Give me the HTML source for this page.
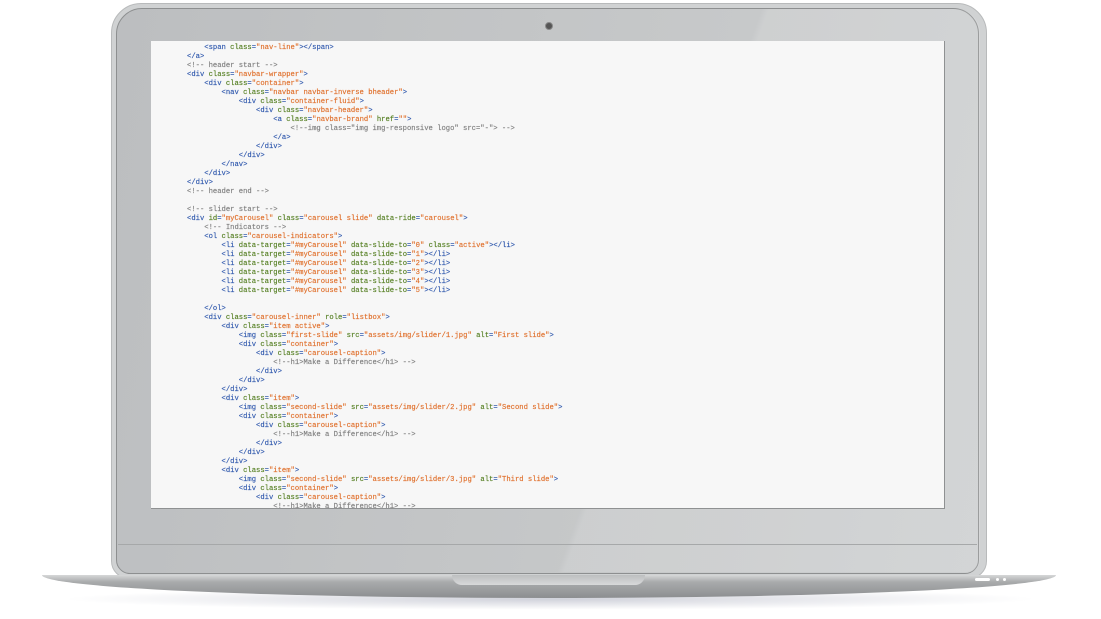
<!DOCTYPE html>
<html><head><meta charset="utf-8"><style>
html,body{margin:0;padding:0;background:#fff;width:1101px;height:619px;overflow:hidden;position:relative;font-family:"Liberation Sans",sans-serif}
.abs{position:absolute}
#shadow{left:60px;top:588px;width:980px;height:22px;border-radius:50%;background:radial-gradient(ellipse at center,rgba(120,125,150,.35),rgba(255,255,255,0) 70%)}
#lid{left:111px;top:3px;width:874px;height:574px;border-radius:30px 30px 18px 18px;background:#d0d2d3;border:1px solid #b8babb}
#lid2{left:116px;top:8px;width:863px;height:566px;border-radius:26px 26px 14px 14px;background:linear-gradient(100deg,#bcbec0 0%,#c6c8c9 60%,#cdcfd0 100%);border:1.5px solid #8d8f90;box-sizing:border-box}
#refl{left:480px;top:9px;width:500px;height:563px;background:linear-gradient(110deg,rgba(255,255,255,0) 0%,rgba(255,255,255,0) 40%,rgba(255,255,255,.12) 41%,rgba(255,255,255,.12) 100%);border-radius:0 24px 12px 0}
#hinge{left:118px;top:544px;width:859px;height:1px;background:#a6a8a9}
#cam{left:545px;top:22px;width:6px;height:6px;border-radius:50%;background:#555;border:1px solid #888}
#screen{left:151px;top:41px;width:794px;height:468px;background:#f7f7f7;border-right:1px solid #8f9192;border-bottom:1px solid #8f9192;box-sizing:border-box;overflow:hidden}
#base{left:42px;top:575px;width:1014px;height:23px;background:linear-gradient(#d6d7d8 0%,#a9abac 30%,#8c8e90 100%);border-radius:0 0 50% 50% / 0 0 100% 100%}
#notch{left:452px;top:575px;width:193px;height:10px;background:linear-gradient(#bdbfc0,#d8d9da);border-radius:0 0 12px 12px}
.led{top:578px;height:3px;background:#fff;border-radius:2px}
pre{margin:0;position:absolute;left:36px;top:3px;font-family:"Liberation Mono",monospace;font-size:7.2px;line-height:9px;color:#2f58ad;-webkit-text-stroke:0.15px}
.a{color:#557f22}.s{color:#e0702c}.c{color:#7f7f7f}
</style></head><body>
<div class="abs" id="shadow"></div>
<div class="abs" id="lid"></div>
<div class="abs" id="lid2"></div>
<div class="abs" id="refl"></div>
<div class="abs" id="hinge"></div>
<div class="abs" id="cam"></div>
<div class="abs" id="screen"><pre>    &lt;span <span class="a">class</span>=<span class="s">"nav-line"</span>&gt;&lt;/span&gt;
&lt;/a&gt;
<span class="c">&lt;!-- header start --&gt;</span>
&lt;div <span class="a">class</span>=<span class="s">"navbar-wrapper"</span>&gt;
    &lt;div <span class="a">class</span>=<span class="s">"container"</span>&gt;
        &lt;nav <span class="a">class</span>=<span class="s">"navbar navbar-inverse bheader"</span>&gt;
            &lt;div <span class="a">class</span>=<span class="s">"container-fluid"</span>&gt;
                &lt;div <span class="a">class</span>=<span class="s">"navbar-header"</span>&gt;
                    &lt;a <span class="a">class</span>=<span class="s">"navbar-brand"</span> <span class="a">href</span>=<span class="s">""</span>&gt;
                        <span class="c">&lt;!--img class="img img-responsive logo" src="-"&gt; --&gt;</span>
                    &lt;/a&gt;
                &lt;/div&gt;
            &lt;/div&gt;
        &lt;/nav&gt;
    &lt;/div&gt;
&lt;/div&gt;
<span class="c">&lt;!-- header end --&gt;</span>

<span class="c">&lt;!-- slider start --&gt;</span>
&lt;div <span class="a">id</span>=<span class="s">"myCarousel"</span> <span class="a">class</span>=<span class="s">"carousel slide"</span> <span class="a">data-ride</span>=<span class="s">"carousel"</span>&gt;
    <span class="c">&lt;!-- Indicators --&gt;</span>
    &lt;ol <span class="a">class</span>=<span class="s">"carousel-indicators"</span>&gt;
        &lt;li <span class="a">data-target</span>=<span class="s">"#myCarousel"</span> <span class="a">data-slide-to</span>=<span class="s">"0"</span> <span class="a">class</span>=<span class="s">"active"</span>&gt;&lt;/li&gt;
        &lt;li <span class="a">data-target</span>=<span class="s">"#myCarousel"</span> <span class="a">data-slide-to</span>=<span class="s">"1"</span>&gt;&lt;/li&gt;
        &lt;li <span class="a">data-target</span>=<span class="s">"#myCarousel"</span> <span class="a">data-slide-to</span>=<span class="s">"2"</span>&gt;&lt;/li&gt;
        &lt;li <span class="a">data-target</span>=<span class="s">"#myCarousel"</span> <span class="a">data-slide-to</span>=<span class="s">"3"</span>&gt;&lt;/li&gt;
        &lt;li <span class="a">data-target</span>=<span class="s">"#myCarousel"</span> <span class="a">data-slide-to</span>=<span class="s">"4"</span>&gt;&lt;/li&gt;
        &lt;li <span class="a">data-target</span>=<span class="s">"#myCarousel"</span> <span class="a">data-slide-to</span>=<span class="s">"5"</span>&gt;&lt;/li&gt;

    &lt;/ol&gt;
    &lt;div <span class="a">class</span>=<span class="s">"carousel-inner"</span> <span class="a">role</span>=<span class="s">"listbox"</span>&gt;
        &lt;div <span class="a">class</span>=<span class="s">"item active"</span>&gt;
            &lt;img <span class="a">class</span>=<span class="s">"first-slide"</span> <span class="a">src</span>=<span class="s">"assets/img/slider/1.jpg"</span> <span class="a">alt</span>=<span class="s">"First slide"</span>&gt;
            &lt;div <span class="a">class</span>=<span class="s">"container"</span>&gt;
                &lt;div <span class="a">class</span>=<span class="s">"carousel-caption"</span>&gt;
                    <span class="c">&lt;!--h1&gt;Make a Difference&lt;/h1&gt; --&gt;</span>
                &lt;/div&gt;
            &lt;/div&gt;
        &lt;/div&gt;
        &lt;div <span class="a">class</span>=<span class="s">"item"</span>&gt;
            &lt;img <span class="a">class</span>=<span class="s">"second-slide"</span> <span class="a">src</span>=<span class="s">"assets/img/slider/2.jpg"</span> <span class="a">alt</span>=<span class="s">"Second slide"</span>&gt;
            &lt;div <span class="a">class</span>=<span class="s">"container"</span>&gt;
                &lt;div <span class="a">class</span>=<span class="s">"carousel-caption"</span>&gt;
                    <span class="c">&lt;!--h1&gt;Make a Difference&lt;/h1&gt; --&gt;</span>
                &lt;/div&gt;
            &lt;/div&gt;
        &lt;/div&gt;
        &lt;div <span class="a">class</span>=<span class="s">"item"</span>&gt;
            &lt;img <span class="a">class</span>=<span class="s">"second-slide"</span> <span class="a">src</span>=<span class="s">"assets/img/slider/3.jpg"</span> <span class="a">alt</span>=<span class="s">"Third slide"</span>&gt;
            &lt;div <span class="a">class</span>=<span class="s">"container"</span>&gt;
                &lt;div <span class="a">class</span>=<span class="s">"carousel-caption"</span>&gt;
                    <span class="c">&lt;!--h1&gt;Make a Difference&lt;/h1&gt; --&gt;</span></pre></div>
<div class="abs" id="base"></div>
<div class="abs" id="notch"></div>
<div class="abs led" style="left:975px;width:15px"></div>
<div class="abs led" style="left:996px;width:3px"></div>
<div class="abs led" style="left:1003px;width:3px"></div>
</body></html>
